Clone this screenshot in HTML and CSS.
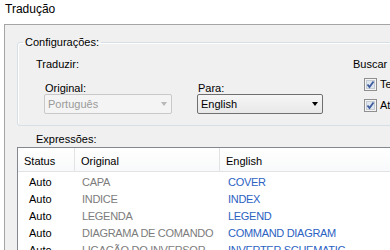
FILE: index.html
```html
<!DOCTYPE html>
<html lang="pt">
<head>
    <meta charset="UTF-8">
    <title>Tradução</title>
    <link rel="stylesheet" href="styles.css">
</head>
<body>
    <div class="title">Tradução</div>
    <div class="panel">
        <fieldset class="group">
            <legend>Configurações:</legend>
            <div class="config">
                <div class="translate">
                    <div class="caption">Traduzir:</div>
                    <div class="fields">
                        <div class="field">
                            <label>Original:</label>
                            <div class="combo disabled"><span>Português</span><i class="arrow"></i></div>
                        </div>
                        <div class="field">
                            <label>Para:</label>
                            <div class="combo para"><span>English</span><i class="arrow"></i></div>
                        </div>
                    </div>
                </div>
                <div class="search">
                    <div class="caption">Buscar em:</div>
                    <div class="check">
                        <svg width="13" height="13" viewBox="0 0 13 13"><rect x="0.5" y="0.5" width="12" height="12" fill="#f4f4f4" stroke="#8f8f8f"/><rect x="2.5" y="2.5" width="8" height="8" fill="#dfe6ee" stroke="#c4cbd3"/><path d="M3.5 6.5 L5.5 9 L9.5 3.5" fill="none" stroke="#3c5a9e" stroke-width="1.8"/></svg>
                        <span>Textos</span>
                    </div>
                    <div class="check">
                        <svg width="13" height="13" viewBox="0 0 13 13"><rect x="0.5" y="0.5" width="12" height="12" fill="#f4f4f4" stroke="#8f8f8f"/><rect x="2.5" y="2.5" width="8" height="8" fill="#dfe6ee" stroke="#c4cbd3"/><path d="M3.5 6.5 L5.5 9 L9.5 3.5" fill="none" stroke="#3c5a9e" stroke-width="1.8"/></svg>
                        <span>Atributos</span>
                    </div>
                </div>
            </div>
        </fieldset>

        <div class="caption expr">Expressões:</div>
        <div class="list">
            <div class="row head">
                <div class="c1">Status</div>
                <div class="c2">Original</div>
                <div class="c3">English</div>
            </div>
            <div class="rows">
                <div class="row"><div class="c1">Auto</div><div class="c2">CAPA</div><div class="c3">COVER</div></div>
                <div class="row"><div class="c1">Auto</div><div class="c2">INDICE</div><div class="c3">INDEX</div></div>
                <div class="row"><div class="c1">Auto</div><div class="c2">LEGENDA</div><div class="c3">LEGEND</div></div>
                <div class="row"><div class="c1">Auto</div><div class="c2">DIAGRAMA DE COMANDO</div><div class="c3">COMMAND DIAGRAM</div></div>
                <div class="row"><div class="c1">Auto</div><div class="c2">LIGAÇÃO DO INVERSOR</div><div class="c3">INVERTER SCHEMATIC</div></div>
            </div>
        </div>
    </div>
</body>
</html>
```

FILE: styles.css
```css
body {
    margin: 0;
    font-family: "Liberation Sans", Arial, sans-serif;
    font-size: 11px;
    color: #000;
    background-color: #fff;
    overflow: hidden;
}
.title {
    padding: 2px 0 0 5px;
    height: 22px;
    font-size: 12px;
    line-height: 14px;
}
.panel {
    margin-left: 4px;
    width: 440px;
    height: 300px;
    border: 1px solid #a5a5a5;
    background-color: #f0f0f0;
}
.group {
    margin: 10px 0 0 12px;
    padding: 0 0 11px 0;
    border: 1px solid #d5dfe5;
    border-radius: 3px;
    box-shadow: inset 1px 1px #fff;
}
.group legend {
    margin-left: 5px;
    padding: 0 2px;
    line-height: 14px;
}
.config {
    display: flex;
    padding-top: 8px;
}
.caption {
    line-height: 14px;
}
.translate {
    padding-left: 18px;
}
.fields {
    display: flex;
    gap: 25px;
    padding-left: 8px;
    margin-top: 11px;
}
.field label {
    display: block;
    line-height: 12px;
    margin-left: 1px;
}
.combo {
    display: flex;
    align-items: center;
    justify-content: space-between;
    box-sizing: border-box;
    height: 20px;
    padding: 0 4px 0 3px;
    border-radius: 2px;
}
.combo.disabled {
    width: 128px;
    border: 1px solid #c9c9c9;
    background-color: #f4f4f4;
    color: #9a9a9a;
}
.combo.para {
    width: 126px;
    border: 1px solid #707070;
    background: linear-gradient(#f6f6f6, #e8e8e8);
}
.arrow {
    width: 0;
    height: 0;
    border-left: 3.5px solid transparent;
    border-right: 3.5px solid transparent;
    border-top: 4px solid #000;
}
.disabled .arrow {
    border-top-color: #b8b8b8;
}
.search {
    margin-left: 30px;
    white-space: nowrap;
}
.check {
    display: flex;
    align-items: center;
    gap: 3px;
    margin-left: 11px;
    margin-top: 6px;
    height: 14px;
}
.check + .check {
    margin-top: 7px;
}
.check svg {
    display: block;
}
.expr {
    margin: 6px 0 1px 31px;
}
.list {
    margin-left: 12px;
    border: 1px solid #828790;
    background-color: #fff;
    height: 200px;
}
.row {
    display: flex;
    line-height: 17px;
    white-space: nowrap;
}
.row .c1 {
    width: 46px;
    padding-left: 11px;
}
.row .c2 {
    width: 139px;
    padding-left: 7px;
    color: #7c7c7c;
    letter-spacing: -0.3px;
}
.row .c3 {
    padding-left: 7px;
    color: #2c62c2;
    letter-spacing: -0.3px;
}
.row.head {
    height: 23px;
    border-bottom: 1px solid #e2e3e5;
    background: linear-gradient(#fff, #f8f9fa);
}
.row.head > div {
    padding-top: 6px;
    line-height: 14px;
    color: #000;
    letter-spacing: 0;
}
.row.head .c1 {
    width: 50px;
    padding-left: 6px;
    border-right: 1px solid #e2e3e5;
}
.row.head .c2 {
    width: 138px;
    padding-left: 6px;
    border-right: 1px solid #e2e3e5;
}
.row.head .c3 {
    padding-left: 6px;
}
.rows {
    padding-top: 2px;
}
```
